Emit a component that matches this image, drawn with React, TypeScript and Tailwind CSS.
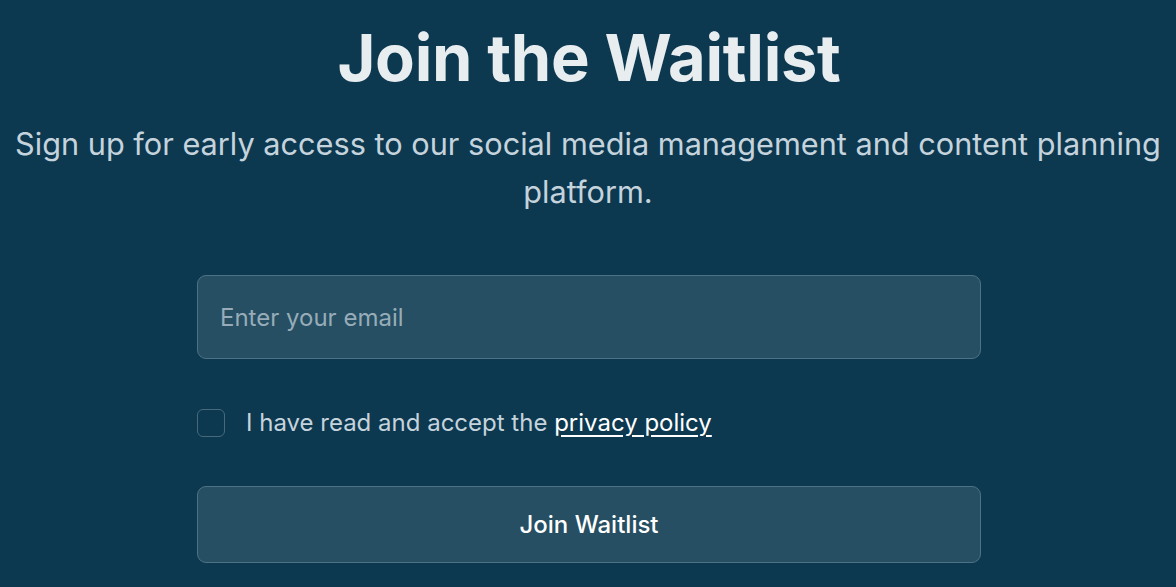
import React from "react";

export default function App() {
  return (
    <div
      className="w-[1176px] h-[587px] overflow-hidden bg-[#0c3850] flex flex-col items-center"
      style={{ fontFamily: "Inter, 'Noto Sans', sans-serif" }}
    >
      <h1 className="mt-[21px] text-[65px] leading-[74px] font-bold text-[#e8edf0] tracking-[-0.3px] pl-[2px]">
        Join the Waitlist
      </h1>
      <p className="mt-[25px] text-[30.7px] leading-[48px] text-[#c5d3dc] text-center w-[1176px] px-[6px]">
        Sign up for early access to our social media management and content planning platform.
      </p>
      <div className="mt-[59px] w-[784px] flex flex-col translate-x-[1px]">
        <input
          type="email"
          placeholder="Enter your email"
          className="h-[84px] w-full rounded-[9px] bg-[#264f63] border border-[#4d7285] px-[22px] text-[24px] text-white placeholder:text-[#97acb8] outline-none"
        />
        <label className="mt-[46px] flex items-center gap-[21px] text-[24px] leading-[36px] text-[#c5d3dc]">
          <span className="w-[28px] h-[28px] rounded-[6px] border border-[#48697c] bg-[#0c3850]" />
          <span>
            I have read and accept the{" "}
            <span className="text-white underline underline-offset-[4px]">privacy policy</span>
          </span>
        </label>
        <button className="mt-[45px] h-[77px] w-full rounded-[9px] bg-[#264f63] border border-[#4d7285] text-[24px] font-medium text-white">
          Join Waitlist
        </button>
      </div>
    </div>
  );
}
